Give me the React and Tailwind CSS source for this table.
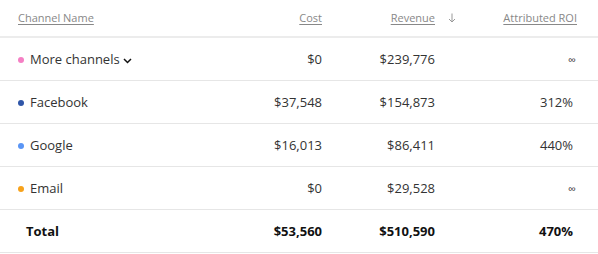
import React from "react";

const rows = [
  { name: "More channels", dot: "bg-[#f57fc4]", cost: "$0", revenue: "$239,776", roi: "∞", more: true },
  { name: "Facebook", dot: "bg-[#2f56a8]", cost: "$37,548", revenue: "$154,873", roi: "312%" },
  { name: "Google", dot: "bg-[#5a95f5]", cost: "$16,013", revenue: "$86,411", roi: "440%" },
  { name: "Email", dot: "bg-[#f7a21b]", cost: "$0", revenue: "$29,528", roi: "∞" },
];

const grid = "grid grid-cols-[222px_82px_113px_1fr] items-center pl-[18px] pr-[21px]";

export default function App() {
  return (
    <div className="w-[598px] h-[254px] bg-white font-['Open_Sans',sans-serif] text-[13px] text-[#333]">
      {/* header */}
      <div className={`${grid} h-[38px] border-b-2 border-[#ececec] text-[11px] text-[#888]`}>
        <span className="underline underline-offset-2">Channel Name</span>
        <span className="text-right underline underline-offset-2">Cost</span>
        <span className="relative text-right">
          <span className="underline underline-offset-2">Revenue</span>
          <svg width="8" height="10" viewBox="0 0 8 10" className="absolute left-full ml-[13px] top-[3px]">
            <path d="M4 0.5 V9 M1 6 L4 9 L7 6" fill="none" stroke="#999" strokeWidth="1" />
          </svg>
        </span>
        <span className="text-right underline underline-offset-2">Attributed ROI</span>
      </div>

      {rows.map((r) => (
        <div key={r.name} className={`${grid} h-[43px] pt-[2px] border-b border-[#e6e6e6]`}>
          <div className="flex items-center">
            <span className={`w-[6px] h-[6px] rounded-full ${r.dot} mr-[6px]`} />
            <span>{r.name}</span>
            {r.more && (
              <svg width="9" height="6" viewBox="0 0 9 6" className="ml-[3px] mt-[1px]">
                <path d="M1 1 L4.5 4.5 L8 1" fill="none" stroke="#111" strokeWidth="1.5" />
              </svg>
            )}
          </div>
          <span className="text-right">{r.cost}</span>
          <span className="text-right">{r.revenue}</span>
          <span className={`text-right ${r.roi === "∞" ? "pr-[1px] text-[11px]" : "pr-[4px]"}`}>{r.roi}</span>
        </div>
      ))}

      {/* total */}
      <div className={`${grid} h-[43px] pt-[2px] border-b border-[#e6e6e6] font-bold text-[#111]`}>
        <span className="pl-[8px]">Total</span>
        <span className="text-right">$53,560</span>
        <span className="text-right">$510,590</span>
        <span className="text-right pr-[4px]">470%</span>
      </div>
    </div>
  );
}
